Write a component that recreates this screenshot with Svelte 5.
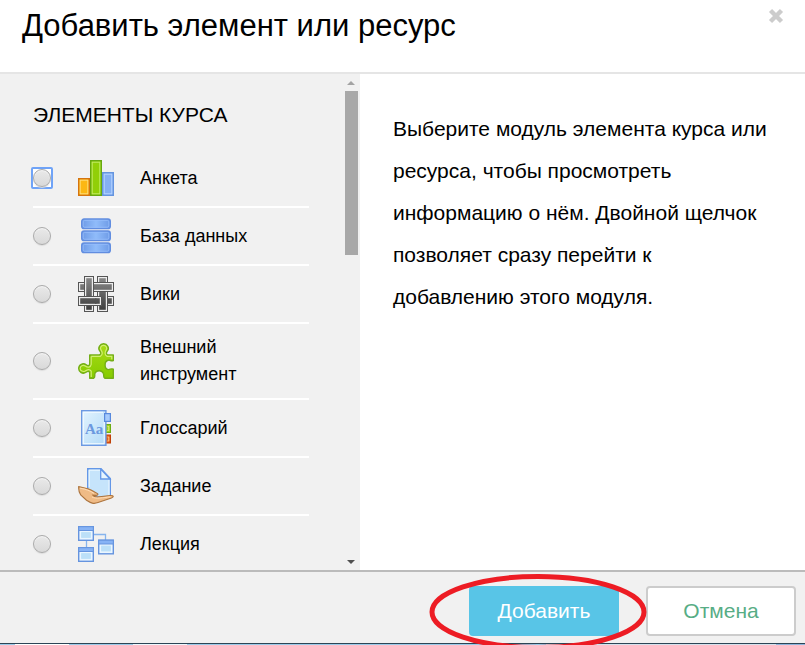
<script>
  const items = [
    { id: 'survey', name: 'Анкета' },
    { id: 'database', name: 'База данных' },
    { id: 'wiki', name: 'Вики' },
    { id: 'tool', name: 'Внешний инструмент' },
    { id: 'glossary', name: 'Глоссарий' },
    { id: 'assignment', name: 'Задание' },
    { id: 'lesson', name: 'Лекция' }
  ];
  // Woven strips, back to front: x, y, width, height
  const strips = [
    [19.5, 0.5, 10, 35],
    [0.5, 6.5, 35, 9],
    [6.5, 0.5, 9, 35],
    [0.5, 20.5, 35, 9]
  ];
  let selected = $state('');
</script>

<div class="dialog">
  <header>
    <h1>Добавить элемент или ресурс</h1>
    <button class="close" aria-label="Закрыть">
      <svg width="16" height="16" viewBox="0 0 16 16"><path d="M2.5 2.5L13.5 13.5M13.5 2.5L2.5 13.5" stroke="#ccc" stroke-width="4.4" /></svg>
    </button>
  </header>

  <main>
    <section class="chooser">
      <div class="list">
        <h2>ЭЛЕМЕНТЫ КУРСА</h2>
        {#each items as item, i}
          <label class="row">
            <span class="tick" class:focused={i === 0}>
              <input type="radio" name="module" value={item.id} bind:group={selected} />
            </span>
            <svg class="icon" width="36" height="36" viewBox="0 0 36 36" aria-hidden="true">
              {#if item.id === 'survey'}
                <rect x=".75" y="18.75" width="10.5" height="16.5" fill="#fcb713" stroke="#d5740e" stroke-width="1.5" />
                <rect x="2.2" y="20.2" width="7.6" height="13.6" fill="none" stroke="#ffdc79" />
                <rect x="12.75" y=".75" width="10.5" height="34.5" fill="#91cf08" stroke="#67a810" stroke-width="1.5" />
                <rect x="14.2" y="2.2" width="7.6" height="31.6" fill="none" stroke="#c2eb65" />
                <rect x="24.75" y="12.75" width="10.5" height="22.5" fill="#85b0f3" stroke="#6595df" stroke-width="1.5" />
                <rect x="26.2" y="14.2" width="7.6" height="19.6" fill="none" stroke="#b5d4ff" />
              {:else if item.id === 'database'}
                <defs><linearGradient id="db"><stop stop-color="#6d9ae6" /><stop offset=".5" stop-color="#90bcfa" /><stop offset="1" stop-color="#6d9ae6" /></linearGradient></defs>
                {#each [1, 13, 25] as y}
                  <rect x="3.7" y={y} width="28.6" height="9.6" rx="2.4" fill="url(#db)" stroke="#618de0" stroke-width="1.4" />
                  <rect x="5.2" y={y + 1.4} width="25.6" height="6.8" rx="1.4" fill="none" stroke="#95bdfa" stroke-width=".8" />
                {/each}
              {:else if item.id === 'wiki'}
                <defs>
                  <linearGradient id="wk" gradientUnits="userSpaceOnUse" x1="0" y1="0" x2="0" y2="36"><stop stop-color="#8c8c8c" /><stop offset="1" stop-color="#3a3a3a" /></linearGradient>
                  <clipPath id="wkc"><rect x="18" y="18" width="13" height="18" /></clipPath>
                </defs>
                {#each strips as [x, y, w, h]}
                  <rect {x} {y} width={w} height={h} fill="#ededed" stroke="#555" />
                  <rect x={x + 1.7} y={y + 1.7} width={w - 3.4} height={h - 3.4} fill="url(#wk)" />
                {/each}
                <g clip-path="url(#wkc)">
                  <rect x="19.5" y=".5" width="10" height="35" fill="#ededed" stroke="#555" />
                  <rect x="21.2" y="2.2" width="6.6" height="31.6" fill="url(#wk)" />
                </g>
                <path d="M18.5 20.5H23.5V29.5H18.5Z" fill="#ededed" />
                <path d="M17 22.2H21.8V27.8H17Z" fill="url(#wk)" />
                <path d="M18 20.5H23.5V29.5H18" fill="none" stroke="#555" />
              {:else if item.id === 'tool'}
                <defs><linearGradient id="pz" x2="0" y2="1"><stop stop-color="#a9dc16" /><stop offset="1" stop-color="#85cb00" /></linearGradient></defs>
                <path d="M11.7 12H21.5C23.5 11 23 9.5 22 8.2C19.2 5 22 .8 25.6 .8S32 5 29.2 8.2C28 9.8 28 11 29.7 12H35.3V17.5C33 18.5 32.2 16.8 30.3 17.2C26 18 26 26 30.3 26.6C32.2 26.8 33 25 35.3 26.2V35.3H27C24.5 33.8 26.5 32.5 25.3 30.3C23.5 26.8 18.5 27 17 30.3C16 32.8 18 33.8 15.5 35.3H11.7V29.3C10.5 27.5 9.3 28.2 8 29.3C4.8 31.6 .7 29 .7 25.4S5 19.2 8.2 21.8C9.6 23 11 23 11.7 21.2Z" fill="url(#pz)" stroke="#74ae18" stroke-width="1.4" stroke-linejoin="round" />
                <path d="M13.2 13.4H22.2C25.2 11.7 24.4 9 23.2 7.3C21.5 5 23 2.3 25.6 2.3S29.7 5 28 7.3C26.6 9.5 26.7 12.2 29.2 13.4H33.8V16.2M13.2 34V28.2C11.5 25.6 9.2 26.6 7.2 28C5 29.3 2.2 27.8 2.2 25.4S5 21.5 7.3 23.1C10 25 12.6 24.6 13.2 21.4V13.4" fill="none" stroke="#d0ee72" stroke-width="1.2" />
              {:else if item.id === 'glossary'}
                <defs><linearGradient id="gl" x2="1" y2="1"><stop stop-color="#e3f4ff" /><stop offset="1" stop-color="#b2daf7" /></linearGradient></defs>
                <rect x="26.5" y="14.5" width="6" height="8" fill="#9bd51b" stroke="#6cab12" />
                <rect x="26.5" y="25" width="6" height="8" fill="#e95c18" stroke="#bf4107" />
                <path d="M29.5 16.5h1.3v4h-1.5M29.5 27h1.3v4h-1.5" stroke="#f5e6a0" fill="none" stroke-width=".8" />
                <rect x="3.7" y=".7" width="24.2" height="34.6" fill="url(#gl)" stroke="#6c99e3" stroke-width="1.4" />
                <path d="M5.3 34V2.3H25M26.2 12V33.7H5" fill="none" stroke="#f3fbff" />
                <rect x="26.6" y="3.6" width="5.8" height="7.8" fill="#a6cbfc" stroke="#5789dd" stroke-width="1.2" />
                <text x="7" y="24" font-family="Liberation Serif, serif" font-weight="bold" font-size="15" fill="#6b99df">Aa</text>
              {:else if item.id === 'assignment'}
                <path d="M9.7 .7H23L32.3 10.5V29H9.7Z" fill="#c6e4fb" stroke="#6497e7" stroke-width="1.4" />
                <path d="M11.2 19V2.2H22.3M31 12V28" fill="none" stroke="#eff9ff" />
                <path d="M22.7 1V11H32Z" fill="#e7f5ff" stroke="#6497e7" stroke-width="1.3" />
                <path d="M.7 18.6C5 19.5 10.5 20.3 14.5 22.8L19.5 25.6C20.4 26.6 19.5 27.4 18 27.4L14.8 27.2C15.8 28.8 18.2 29.2 21.5 28.8L32 27.5C36 27.2 36 29 33.4 30L20 34.6C15 36.5 12.5 34.6 8.5 32.2L2.7 27C1.5 25 .4 21.4 .7 18.6Z" fill="#efbb86" stroke="#ad753f" stroke-width="1.1" />
                <path d="M2 20.2C8 21.3 12 22.7 16 25.4M14 29C18 31.2 25 29.7 32.5 28.8" fill="none" stroke="#ffdcb4" stroke-width="1" />
              {:else}
                <path d="M16 8.5H27.5V14M8.5 15V21" fill="none" stroke="#86b4ed" stroke-width="1.3" />
                {#each [[.7, .7], [20.7, 14.2], [.7, 21.7]] as p}
                  <rect x={p[0]} y={p[1]} width="14.6" height="13.6" fill="#eaf6ff" stroke="#6594df" stroke-width="1.4" />
                  <rect x={p[0]} y={p[1]} width="14.6" height="3.8" fill="#87b3f5" stroke="#6594df" />
                  <rect x={p[0] + 2.4} y={p[1] + 5.4} width="9.8" height="5.8" fill="#bce0f8" />
                {/each}
              {/if}
            </svg>
            <span class="name">{item.name}</span>
          </label>
        {/each}
      </div>
      <div class="track" aria-hidden="true">
        <i class="up"></i>
        <i class="thumb"></i>
        <i class="down"></i>
      </div>
    </section>
    <p class="help">Выберите модуль элемента курса или ресурса, чтобы просмотреть информацию о нём. Двойной щелчок позволяет сразу перейти к добавлению этого модуля.</p>
  </main>

  <footer>
    <div class="marked">
      <button class="add">Добавить</button>
      <svg class="ring" width="218" height="76" viewBox="0 0 218 76" aria-hidden="true"><ellipse cx="109" cy="38" rx="106" ry="35.5" fill="none" stroke="#ed1c24" stroke-width="5" /></svg>
    </div>
    <button class="cancel">Отмена</button>
  </footer>
  <div class="edge"></div>
</div>

<style>
  :global(body) { margin: 0; }
  .dialog {
    display: flex;
    flex-direction: column;
    height: 100vh;
    overflow: hidden;
    background: #fff;
    color: #000;
    font-family: "Liberation Sans", Arial, sans-serif;
  }
  button { font: inherit; cursor: pointer; }
  header {
    display: flex;
    justify-content: space-between;
    align-items: flex-start;
    padding: 6px 21px 26px 22px;
    border-bottom: 2px solid #e5e5e5;
  }
  h1 { margin: 0; font-size: 31px; line-height: 40px; font-weight: 400; }
  .close { display: flex; margin-top: 2px; padding: 0; border: 0; background: none; }
  main { display: flex; flex: 1; min-height: 0; }
  .chooser { display: flex; flex: 0 0 360px; background: #f1f1f1; }
  .list { flex: 1; padding: 26px 36px 0 33px; overflow-y: auto; scrollbar-width: none; }
  h2 { margin: 0 0 20px; font-size: 21px; line-height: 30px; font-weight: 400; }
  .row {
    display: flex;
    align-items: center;
    padding: 10px 0;
    border-bottom: 2px solid #fff;
    font-size: 18px;
    line-height: 27px;
  }
  .tick { display: flex; margin-left: -2px; padding: 0; border: 2px solid transparent; border-radius: 2px; }
  .focused { border-color: #6fa3f7; background: #fff; }
  input {
    appearance: none;
    box-sizing: border-box;
    width: 18px;
    height: 18px;
    margin: 0;
    border: 1px solid #aaa;
    border-radius: 50%;
    background: linear-gradient(#e9e9e9, #d9d9d9);
    box-shadow: inset 0 1px 1px #f5f5f5, 0 1px 1px #ddd;
  }
  input:checked { background: radial-gradient(#555 4px, #e0e0e0 5px); }
  .icon { flex: none; margin: 0 26px 0 25px; }
  .name { flex: 1; padding-right: 40px; }
  .track { display: flex; flex-direction: column; flex: 0 0 15px; padding: 7px 0 6px; }
  .up, .down { width: 0; border: 4px solid transparent; margin-left: 2px; }
  .up { border-top: 0; border-bottom-color: #a3a3a3; }
  .down { margin-top: auto; border-bottom: 0; border-top-color: #505050; }
  .thumb { width: 13px; height: 34%; margin-top: 6px; background: #a8a8a8; }
  .help { flex: 1; margin: 0; padding: 34px 33px; font-size: 21px; line-height: 42px; }
  footer {
    display: flex;
    justify-content: flex-end;
    gap: 27px;
    padding: 14px 9px 7px;
    border-top: 2px solid #bbb;
    background: #f1f1f1;
    font-size: 21px;
  }
  .marked { position: relative; }
  .add, .cancel { box-sizing: border-box; width: 150px; height: 50px; padding: 0; border-radius: 4px; }
  .add { border: 0; background: #58c5e7; color: #fff; }
  .cancel { border: 2px solid #ccc; background: #fff; color: #57ad85; }
  .ring { position: absolute; left: -40px; top: -12px; pointer-events: none; }
  .edge {
    height: 1px;
    border-top: 1px solid #2c4556;
    background: linear-gradient(90deg, #9ccbe9 15px, #fff 15px 69px, #9ccbe9 69px 133px, #eef7fd 133px 187px, #9ccbe9 187px 546px, #d5e1ec 546px 776px, #8fb4dc 776px);
  }
</style>
